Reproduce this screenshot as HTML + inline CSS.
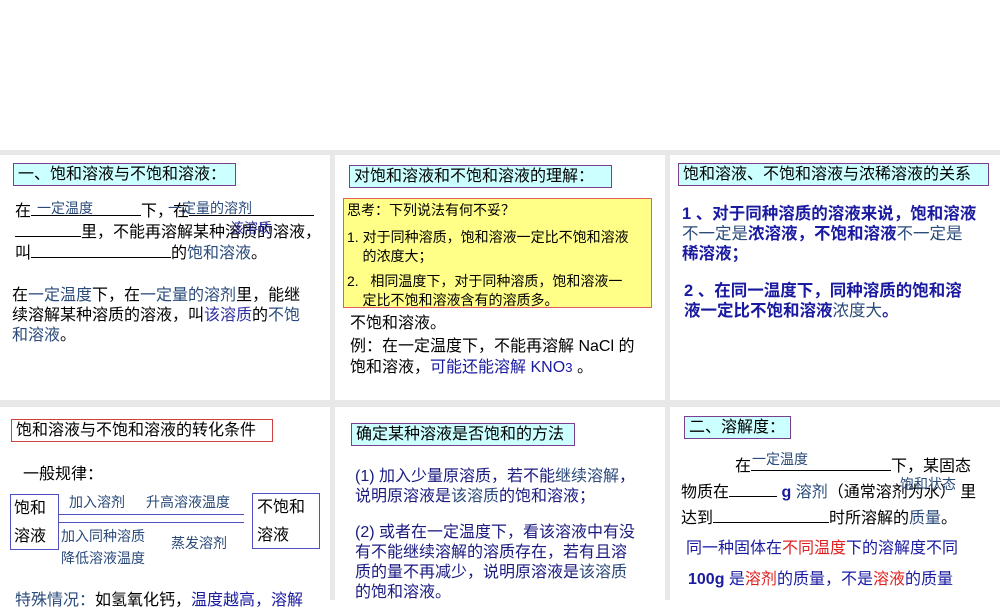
<!DOCTYPE html>
<html><head><meta charset="utf-8"><style>
*{margin:0;padding:0}
body{width:1000px;height:600px;position:relative;overflow:hidden;background:#fff;font-family:"Liberation Sans","Noto Sans CJK SC",sans-serif;font-size:16px;color:#000}
.g{position:absolute;background:#e8e8e8}
.a{position:absolute;white-space:nowrap}
.t{position:absolute;background:#ccffff;border:1.5px solid #7a3f8f;padding:0 4px;height:21px;line-height:21px;white-space:nowrap;font-size:16px}
.bl{color:#2a4a7a}
.bb{color:#1a1aa0;font-weight:bold}
.r{color:#e02020}
.u{display:inline-block;border-bottom:1px solid #000;height:14px;vertical-align:baseline}
</style></head><body>
<div class="g" style="left:0;top:150px;width:1000px;height:5px"></div>
<div class="g" style="left:0;top:400px;width:1000px;height:7px"></div>
<div class="g" style="left:330px;top:150px;width:5px;height:450px"></div>
<div class="g" style="left:665px;top:150px;width:5px;height:450px"></div>

<!-- panel 1 -->
<div class="t" style="left:13px;top:163px;width:213px">一、饱和溶液与不饱和溶液：</div>
<div class="a" style="left:15px;top:201px;line-height:20px">在<span class="u" style="width:110px"></span>下，在<span class="u" style="width:125px"></span><br><span class="u" style="width:66px"></span>里，不能再溶解某种溶质的溶液，<br>叫<span class="u" style="width:140px"></span>的<span class="bl">饱和溶液</span>。</div>
<div class="a bl" style="left:37px;top:198px;font-size:14px">一定温度</div>
<div class="a bl" style="left:168px;top:198px;font-size:14px">一定量的溶剂</div>
<div class="a" style="left:230px;top:218px;font-size:14px;color:#3030a0">该溶质</div>
<div class="a" style="left:12px;top:286px;line-height:20px">在<span class="bl">一定温度</span>下，在<span class="bl">一定量的溶剂</span>里，能继<br>续溶解某种溶质的溶液，叫<span style="color:#3030a0">该溶质</span>的<span class="bl">不饱<br>和溶液</span>。</div>

<!-- panel 2 -->
<div class="t" style="left:349px;top:165px;width:253px">对饱和溶液和不饱和溶液的理解：</div>
<div class="a" style="left:343px;top:198px;width:309px;height:110px;background:#ffff88;border:1.5px solid #e06060;font-size:14px;line-height:19px;padding:2px 3px;box-sizing:border-box">思考：下列说法有何不妥？<div style="margin-top:8px">1. 对于同种溶质，饱和溶液一定比不饱和溶液<br>&nbsp;&nbsp;&nbsp;&nbsp;的浓度大；</div><div style="margin-top:6px">2.&nbsp;&nbsp;&nbsp;相同温度下，对于同种溶质，饱和溶液一<br>&nbsp;&nbsp;&nbsp;&nbsp;定比不饱和溶液含有的溶质多。</div></div>
<div class="a" style="left:350px;top:309px">不饱和溶液。</div>
<div class="a" style="left:350px;top:336px;line-height:21px">例：在一定温度下，不能再溶解 NaCl 的<br>饱和溶液，<span style="color:#1a1aa0">可能还能溶解 KNO<small>3</small></span> 。</div>

<!-- panel 3 -->
<div class="t" style="left:678px;top:163px;width:301px">饱和溶液、不饱和溶液与浓稀溶液的关系</div>
<div class="a bb" style="left:682px;top:204px;line-height:20px;font-size:16.5px">1 、对于同种溶质的溶液来说，饱和溶液<br><span style="color:#2a4a7a;font-weight:normal">不一定是</span>浓溶液，不饱和溶液<span style="color:#2a4a7a;font-weight:normal">不一定是</span><br>稀溶液；</div>
<div class="a bb" style="left:684px;top:281px;line-height:20px;font-size:16.5px">2 、在同一温度下，同种溶质的饱和溶<br>液一定比不饱和溶液<span style="color:#2a4a7a;font-weight:normal">浓度大</span>。</div>

<!-- panel 4 -->
<div class="t" style="left:11px;top:419px;width:252px;border-color:#d04040;background:#fff">饱和溶液与不饱和溶液的转化条件</div>
<div class="a" style="left:23px;top:460px">一般规律：</div>
<div class="a" style="left:10px;top:494px;width:44px;height:54px;border:1.5px solid #5050c0;line-height:28px;padding-left:3px">饱和<br>溶液</div>
<div class="a" style="left:252px;top:493px;width:62px;height:54px;border:1.5px solid #5050c0;line-height:28px;padding-left:4px">不饱和<br>溶液</div>
<div class="a bl" style="left:69px;top:492px;font-size:14px">加入溶剂</div>
<div class="a bl" style="left:146px;top:492px;font-size:14px">升高溶液温度</div>
<div class="a" style="left:58px;top:514px;width:186px;height:1px;background:#5050c0"></div>
<div class="a" style="left:58px;top:522px;width:186px;height:1px;background:#5050c0"></div>
<div class="a bl" style="left:61px;top:525px;font-size:14px;line-height:22px">加入同种溶质<br>降低溶液温度</div>
<div class="a bl" style="left:171px;top:533px;font-size:14px">蒸发溶剂</div>
<div class="a" style="left:15px;top:586px"><span class="bl">特殊情况：</span>如氢氧化钙，<span style="color:#1a1aa0">温度越高，溶解</span></div>

<!-- panel 5 -->
<div class="t" style="left:351px;top:423px;width:214px">确定某种溶液是否饱和的方法</div>
<div class="a" style="left:355px;top:467px;line-height:20px;color:#1a1a80">(1) 加入少量原溶质，若不能<span class="bl">继续溶解</span>，<br>说明原溶液是<span class="bl">该溶质</span>的饱和溶液；</div>
<div class="a" style="left:355px;top:523px;line-height:20px;color:#1a1a80">(2) 或者在一定温度下，看该溶液中有没<br>有不能继续溶解的溶质存在，若有且溶<br>质的量不再减少，说明原溶液是<span class="bl">该溶质</span><br>的饱和溶液。</div>

<!-- panel 6 -->
<div class="t" style="left:684px;top:416px;width:97px">二、溶解度：</div>
<div class="a" style="left:735px;top:452px">在<span class="u" style="width:140px"></span>下，某固态</div>
<div class="a bl" style="left:752px;top:449px;font-size:14px">一定温度</div>
<div class="a" style="left:681px;top:478px">物质在<span class="u" style="width:48px"></span> <span class="bb">g</span> <span class="bl">溶剂</span>（通常溶剂为水） 里</div>
<div class="a bl" style="left:900px;top:474px;font-size:14px">饱和状态</div>
<div class="a" style="left:681px;top:504px">达到<span class="u" style="width:116px"></span>时所溶解的<span class="bl">质量</span>。</div>
<div class="a" style="left:686px;top:534px;color:#1a1aa0">同一种固体在<span class="r">不同温度</span>下的溶解度不同</div>
<div class="a" style="left:688px;top:565px;color:#1a1aa0"><b>100g</b> 是<span class="r">溶剂</span>的质量，不是<span class="r">溶液</span>的质量</div>
</body></html>
